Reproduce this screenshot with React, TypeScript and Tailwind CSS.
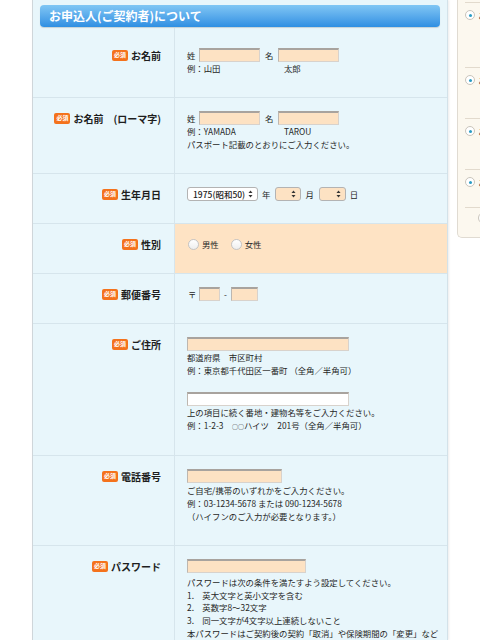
import type { ReactNode } from "react"

const font = { fontFamily: '"Noto Sans CJK JP", "Noto Sans", sans-serif' }

function Req() {
  return (
    <span className="inline-flex h-[11px] w-[16px] shrink-0 items-center justify-center rounded-[2px] bg-[#f4721c] text-[6px] font-bold leading-none text-white">
      必須
    </span>
  )
}

function Field({ w, white }: { w: string; white?: boolean }) {
  return (
    <span
      className={`${w} ${
        white ? "bg-white" : "bg-[#fde2c3]"
      } inline-block h-[14px] shrink-0 border border-t-2 border-[#d8d2cc] border-t-[#a8a39e] border-l-[#bdb7b0]`}
    />
  )
}

function Arrows() {
  return (
    <svg width="5" height="8" viewBox="0 0 5 8" className="shrink-0">
      <path d="M2.5 0.5 L4.5 3 L0.5 3 Z" fill="#333" />
      <path d="M2.5 7.5 L4.5 5 L0.5 5 Z" fill="#333" />
    </svg>
  )
}

function Select({ w, value, orange }: { w: string; value?: string; orange?: boolean }) {
  return (
    <span
      className={`${w} ${
        orange ? "bg-[#fde2c3]" : "bg-white"
      } flex h-[14px] shrink-0 items-center justify-between rounded-[3px] border border-[#b3b3b3] pl-[5px] pr-[4px] text-[8.5px] font-medium text-[#222]`}
    >
      <span>{value}</span>
      <Arrows />
    </span>
  )
}

function Radio({ label }: { label: string }) {
  return (
    <span className="flex items-center gap-[3px]">
      <span className="h-[11px] w-[11px] rounded-full border border-[#c4c4c4] bg-gradient-to-b from-white to-[#eeeeee]" />
      <span>{label}</span>
    </span>
  )
}

function Row({
  label,
  children,
  first,
  hl,
}: {
  label: ReactNode
  children: ReactNode
  first?: boolean
  hl?: boolean
}) {
  return (
    <div className="flex border-b border-[#d6e5ec]">
      <div
        className={`${
          first ? "pt-[20px]" : "pt-[13px]"
        } w-[141px] shrink-0 pr-[13px]`}
      >
        <div className="flex h-[14px] items-center justify-end gap-[3px] text-[10px] font-bold text-[#1e1e1e]">
          <Req />
          <span className="whitespace-nowrap">{label}</span>
        </div>
      </div>
      <div
        className={`${first ? "pt-[20px]" : "pt-[13px]"} ${
          hl ? "bg-[#fee3c4]" : ""
        } min-w-0 flex-1 border-l border-[#d6e5ec] pb-[22px] pl-[12px] text-[8.4px] leading-[13px] text-[#262626]`}
      >
        {children}
      </div>
    </div>
  )
}

function NameFields() {
  return (
    <div className="flex h-[14px] items-center">
      <span className="w-[12px]">姓</span>
      <Field w="w-[61px]" />
      <span className="ml-[5px] w-[13px]">名</span>
      <Field w="w-[61px]" />
    </div>
  )
}

function SideItem({ h, text }: { h: string; text: string }) {
  return (
    <div className={`${h} flex items-start gap-[3px] border-t border-[#e2dacd] pt-[7px]`}>
      <span className="flex h-[10px] w-[10px] shrink-0 items-center justify-center rounded-full border border-[#c9c4bb] bg-white">
        <span className="h-[3px] w-[3px] rounded-full bg-[#2b9cc4]" />
      </span>
      <span className="whitespace-nowrap text-[8.5px] leading-[10px] text-[#333]">{text}</span>
    </div>
  )
}

export default function App() {
  return (
    <div className="flex h-[640px] w-[480px] overflow-hidden bg-white" style={font}>
      <div className="w-[32px] shrink-0" />
      <main className="w-[416px] shrink-0 border-x border-l-[#cfd6da] border-r-[#d3e2e9] bg-[#e8f6fb] pt-[5px] shadow-[1px_0_2px_rgba(0,0,0,0.08)]">
        <div className="mx-[7px] mb-[1px] flex h-[22px] items-center rounded-[4px] bg-gradient-to-b from-[#80c6f4] to-[#2e8fe2] pl-[9px] text-[12px] font-bold text-white shadow-[0_1px_1px_rgba(0,0,0,0.15)]">
          お申込人(ご契約者)について
        </div>

        <Row label="お名前" first>
          <NameFields />
          <div className="flex">
            <span className="w-[97px]">例：山田</span>
            <span>太郎</span>
          </div>
        </Row>

        <Row label="お名前　(ローマ字)">
          <NameFields />
          <div className="flex">
            <span className="w-[97px]">例：YAMADA</span>
            <span>TAROU</span>
          </div>
          <div>パスポート記載のとおりにご入力ください。</div>
        </Row>

        <Row label="生年月日">
          <div className="flex h-[14px] items-center gap-[4px]">
            <Select w="w-[71px]" value="1975(昭和50)" />
            <span className="mr-[1px]">年</span>
            <Select w="w-[26px]" orange />
            <span className="mr-[1px]">月</span>
            <Select w="w-[27px]" orange />
            <span>日</span>
          </div>
        </Row>

        <Row label="性別" hl>
          <div className="flex h-[14px] items-center gap-[12px] pl-[1px]">
            <Radio label="男性" />
            <Radio label="女性" />
          </div>
        </Row>

        <Row label="郵便番号">
          <div className="flex h-[14px] items-center">
            <span className="ml-[1px] w-[11px]">〒</span>
            <Field w="w-[21px]" />
            <span className="w-[11px] text-center">-</span>
            <Field w="w-[27px]" />
          </div>
        </Row>

        <Row label="ご住所">
          <div className="flex h-[14px] items-center">
            <Field w="w-[162px]" />
          </div>
          <div>都道府県　市区町村</div>
          <div>例：東京都千代田区一番町 （全角／半角可）</div>
          <div className="mt-[15px] flex h-[14px] items-center">
            <Field w="w-[162px]" white />
          </div>
          <div>上の項目に続く番地・建物名等をご入力ください。</div>
          <div>
            例：1-2-3　<span className="text-[6px]">○○</span>ハイツ　201号（全角／半角可）
          </div>
        </Row>

        <Row label="電話番号">
          <div className="flex h-[14px] items-center">
            <Field w="w-[95px]" />
          </div>
          <div className="mt-[1px]">ご自宅/携帯のいずれかをご入力ください。</div>
          <div>例：03-1234-5678 または 090-1234-5678</div>
          <div>（ハイフンのご入力が必要となります。）</div>
        </Row>

        <Row label="パスワード">
          <div className="flex h-[14px] items-center">
            <Field w="w-[119px]" />
          </div>
          <div className="mt-[3px] leading-[12.7px]">
            <div>パスワードは次の条件を満たすよう設定してください。</div>
            <div>1.　英大文字と英小文字を含む</div>
            <div>2.　英数字8〜32文字</div>
            <div>3.　同一文字が4文字以上連続しないこと</div>
            <div className="whitespace-nowrap">
              本パスワードはご契約後の契約「取消」や保険期間の「変更」など
            </div>
          </div>
        </Row>
      </main>
      <div className="w-[9px] shrink-0" />
      <aside className="h-[238px] w-[40px] shrink-0 overflow-hidden rounded-bl-[5px] border-b border-l border-[#e0dbd2] bg-[#fcf8ef] pl-[7px] pt-[2px]">
        <SideItem h="h-[65px]" text="ご契約" />
        <SideItem h="h-[51px]" text="ご契約" />
        <SideItem h="h-[51px]" text="ご契約" />
        <SideItem h="h-[38px]" text="ご契約" />
        <div className="h-[30px] border-t border-[#e2dacd] pt-[4px]">
          <span className="ml-[13px] block h-[12px] w-[14px] rounded-full border border-[#c9c4bb] bg-white" />
        </div>
      </aside>
    </div>
  )
}
